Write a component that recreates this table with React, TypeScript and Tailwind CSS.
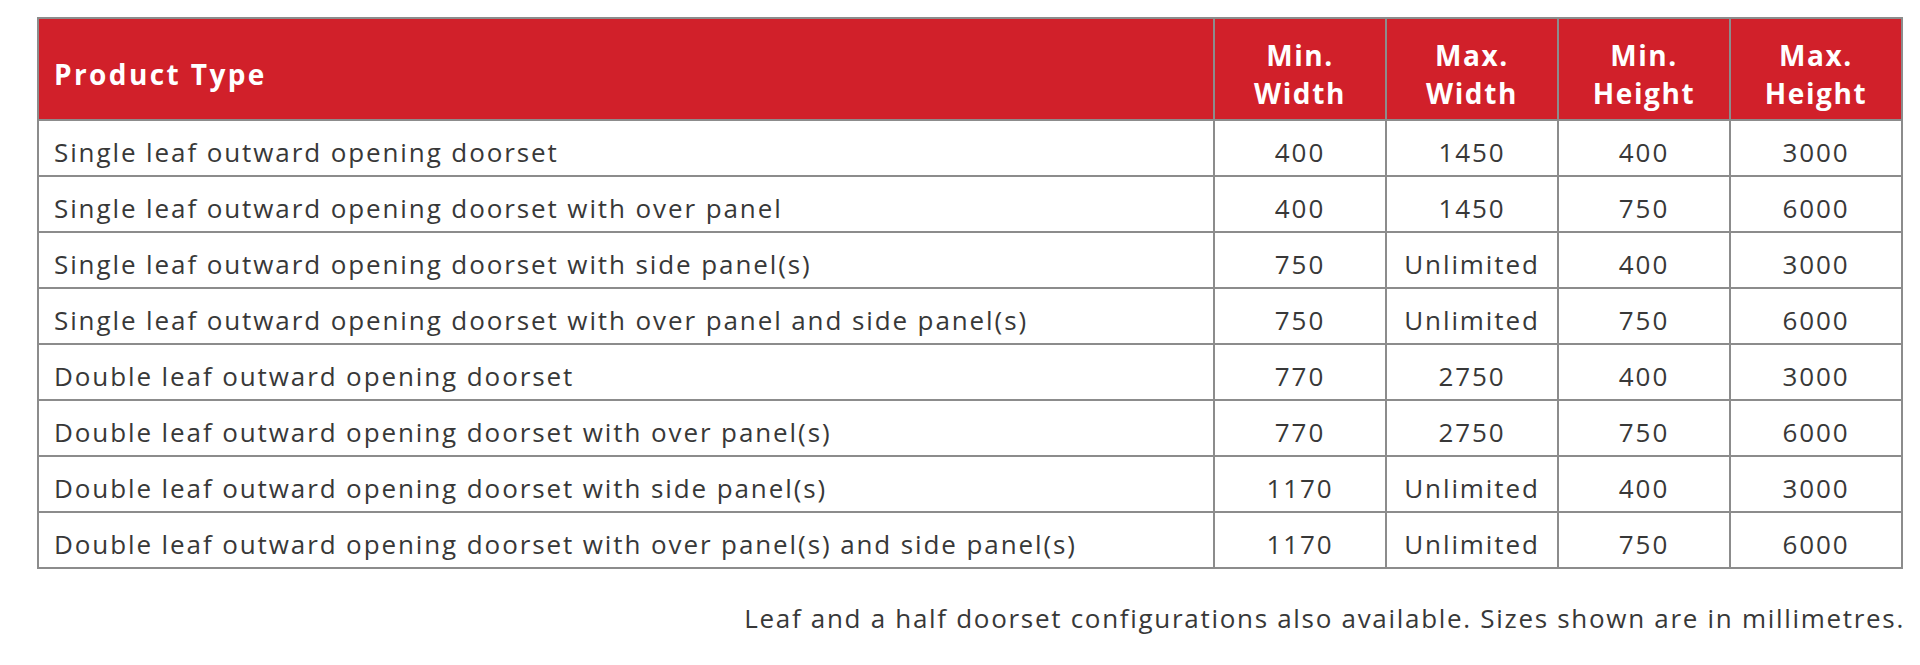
const rows: [string, string, string, string, string][] = [
  ["Single leaf outward opening doorset", "400", "1450", "400", "3000"],
  ["Single leaf outward opening doorset with over panel", "400", "1450", "750", "6000"],
  ["Single leaf outward opening doorset with side panel(s)", "750", "Unlimited", "400", "3000"],
  ["Single leaf outward opening doorset with over panel and side panel(s)", "750", "Unlimited", "750", "6000"],
  ["Double leaf outward opening doorset", "770", "2750", "400", "3000"],
  ["Double leaf outward opening doorset with over panel(s)", "770", "2750", "750", "6000"],
  ["Double leaf outward opening doorset with side panel(s)", "1170", "Unlimited", "400", "3000"],
  ["Double leaf outward opening doorset with over panel(s) and side panel(s)", "1170", "Unlimited", "750", "6000"],
];

const heads = [
  ["Min.", "Width"],
  ["Max.", "Width"],
  ["Min.", "Height"],
  ["Max.", "Height"],
];

export default function App() {
  return (
    <div className="w-[1920px] h-[665px] bg-white pl-[37px] pt-[17px] font-['Open_Sans',sans-serif]">
      <table className="w-[1866px] border-collapse table-fixed border-2 border-[#8c8c8c]">
        <colgroup>
          <col className="w-[1176px]" />
          <col />
          <col />
          <col />
          <col />
        </colgroup>
        <thead>
          <tr className="bg-[#d1202a] h-[102px] text-white">
            <th className="text-left pl-[15px] pt-[9px] text-[28px] font-bold tracking-[2.4px] border-2 border-[#8c8c8c]">
              Product Type
            </th>
            {heads.map((h, i) => (
              <th
                key={i}
                className="text-center pt-[10px] text-[28px] font-bold tracking-[1.6px] leading-[38px] border-2 border-[#8c8c8c]"
              >
                {h[0]}
                <br />
                {h[1]}
              </th>
            ))}
          </tr>
        </thead>
        <tbody>
          {rows.map((r, i) => (
            <tr key={i} className="h-[56px] text-[#383838] text-[26px] tracking-[1.9px]">
              <td className="pl-[15px] pt-[8px] border-2 border-[#8c8c8c]">{r[0]}</td>
              {r.slice(1).map((c, j) => (
                <td key={j} className="text-center pt-[8px] border-2 border-[#8c8c8c]">
                  {c}
                </td>
              ))}
            </tr>
          ))}
        </tbody>
      </table>
      <p className="w-[1868px] text-right mt-[30px] text-[26px] tracking-[1.7px] text-[#383838]">
        Leaf and a half doorset configurations also available. Sizes shown are in millimetres.
      </p>
    </div>
  );
}
